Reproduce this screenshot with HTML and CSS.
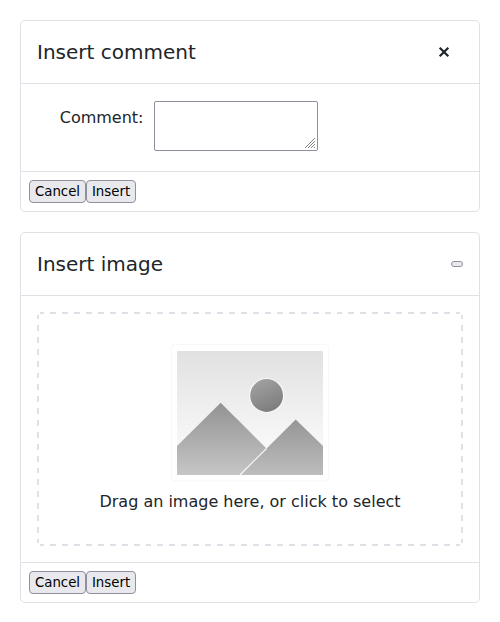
FILE: index.html
```html
<!DOCTYPE html>
<html lang="en">
<head>
<meta charset="utf-8">
<title>Insert dialogs</title>
<link rel="stylesheet" href="styles.css">
</head>
<body>
<section class="modal">
  <header class="modal-header">
    <h5 class="modal-title">Insert comment</h5>
    <svg class="close" width="12" height="12" viewBox="0 0 12 12"><path d="M1.700 1.700L10.300 10.300M10.300 1.700L1.700 10.300"/></svg>
  </header>
  <div class="modal-body comment-body">
    <label class="comment-label" for="comment">Comment:</label>
    <div class="textarea-wrap">
      <textarea id="comment" class="comment-input"></textarea>
      <svg class="resizer" width="12" height="12" viewBox="0 0 12 12"><path d="M1 11L11 1M4 11L11 4M7 11L11 7M10 11L11 10"/></svg>
    </div>
  </div>
  <footer class="modal-footer"><button class="btn">Cancel</button><button class="btn btn-insert">Insert</button></footer>
</section>
<section class="modal">
  <header class="modal-header">
    <h5 class="modal-title">Insert image</h5>
    <button class="empty-close"></button>
  </header>
  <div class="modal-body">
    <div class="dropzone">
      <svg class="placeholder" width="160" height="142" viewBox="170 341 160 142">
        <defs>
          <linearGradient id="sky" x1="0" y1="0" x2="0" y2="1"><stop offset="0" stop-color="#e1e1e1"/><stop offset="1" stop-color="#ffffff"/></linearGradient>
          <linearGradient id="hill" gradientUnits="userSpaceOnUse" x1="0" y1="402" x2="0" y2="475"><stop offset="0" stop-color="#929292"/><stop offset="1" stop-color="#c6c6c6"/></linearGradient>
          <linearGradient id="hill2" gradientUnits="userSpaceOnUse" x1="0" y1="419" x2="0" y2="475"><stop offset="0" stop-color="#959595"/><stop offset="1" stop-color="#bdbdbd"/></linearGradient>
          <linearGradient id="sun" x1="0.2" y1="0" x2="0.7" y2="1"><stop offset="0" stop-color="#a3a3a3"/><stop offset="1" stop-color="#7b7b7b"/></linearGradient>
        </defs>
        <rect x="171.300" y="344.300" width="157.400" height="136.500" rx="4" fill="#fff" stroke="#f7f7f7"/>
        <rect x="177" y="351" width="146" height="124" rx="1" fill="url(#sky)"/>
        <path d="M177 446L220.700 402.800L266.500 448.500L240 475H177Z" fill="url(#hill)"/>
        <path d="M240 475L295.700 419.600L323 446V475Z" fill="url(#hill2)"/>
        <path d="M240 475L266.500 448.500" stroke="#f7f7f7" stroke-width="1.200"/>
        <circle cx="266.600" cy="395.500" r="17" fill="url(#sun)" stroke="#f8f8f8" stroke-width="1.200"/>
      </svg>
      <p class="drop-text">Drag an image here, or click to select</p>
    </div>
  </div>
  <footer class="modal-footer"><button class="btn">Cancel</button><button class="btn btn-insert">Insert</button></footer>
</section>
</body>
</html>
```
FILE: styles.css
```css
* { box-sizing: border-box; }
body {
  margin: 0;
  padding: 20px;
  background: #fff;
  color: #212529;
  font: 16px/24px "DejaVu Sans", sans-serif;
}
.modal {
  border: 1px solid #dee2e6;
  border-radius: 5px;
  margin-bottom: 20px;
}
.modal-header {
  display: flex;
  align-items: center;
  justify-content: space-between;
  height: 63px;
  padding: 0 16px;
  border-bottom: 1px solid #dee2e6;
}
.modal-title { margin: 0; font-size: 20px; line-height: 30px; font-weight: 400; }
.close {
  margin-right: 13px;
  fill: none;
  stroke: #212529;
  stroke-width: 2.2;
}
.empty-close {
  width: 12px;
  height: 6px;
  padding: 0;
  border: 1px solid #8f8f9d;
  border-radius: 3px;
  background: #e9e9ed;
}
.modal-body { padding: 16px; }
.comment-body { display: flex; height: 87px; padding-top: 17px; }
.comment-label { width: 106.5px; margin-right: 10.5px; padding-top: 5px; line-height: 24px; text-align: right; }
.textarea-wrap { position: relative; width: 164px; height: 50px; }
.comment-input {
  display: block;
  width: 164px;
  height: 50px;
  border: 1px solid #8f8f9d;
  border-radius: 2px;
  background: #fff;
  resize: none;
  outline: none;
}
.resizer { position: absolute; right: 2px; bottom: 2px; fill: none; stroke: #777; stroke-width: .9; }
.modal-footer {
  display: flex;
  align-items: flex-start;
  height: 40px;
  padding: 8px;
  border-top: 1px solid #dee2e6;
}
.btn {
  width: 57px;
  height: 23px;
  padding: 0;
  border: 1px solid #8f8f9d;
  border-radius: 4px;
  background: #e9e9ed;
  color: #000;
  font: 13.333px/21px "DejaVu Sans", sans-serif;
  text-align: center;
}
.btn-insert { width: 50px; }
.dropzone {
  --across: repeating-linear-gradient(90deg, #dee2e6 0 4px, transparent 4px 10px, #dee2e6 10px 11.94px);
  --down: repeating-linear-gradient(180deg, #dee2e6 0 4px, transparent 4px 10px, #dee2e6 10px 11.88px);
  display: flex;
  flex-direction: column;
  align-items: center;
  height: 234px;
  padding-top: 29px;
  background:
    var(--across) 3px 0 / 420px 2px no-repeat,
    var(--across) 3px 100% / 420px 2px no-repeat,
    var(--down) 0 3px / 2px 228px no-repeat,
    var(--down) 100% 3px / 2px 228px no-repeat;
}
.placeholder { display: block; }
.drop-text { margin: 7px 0 0; }
```
